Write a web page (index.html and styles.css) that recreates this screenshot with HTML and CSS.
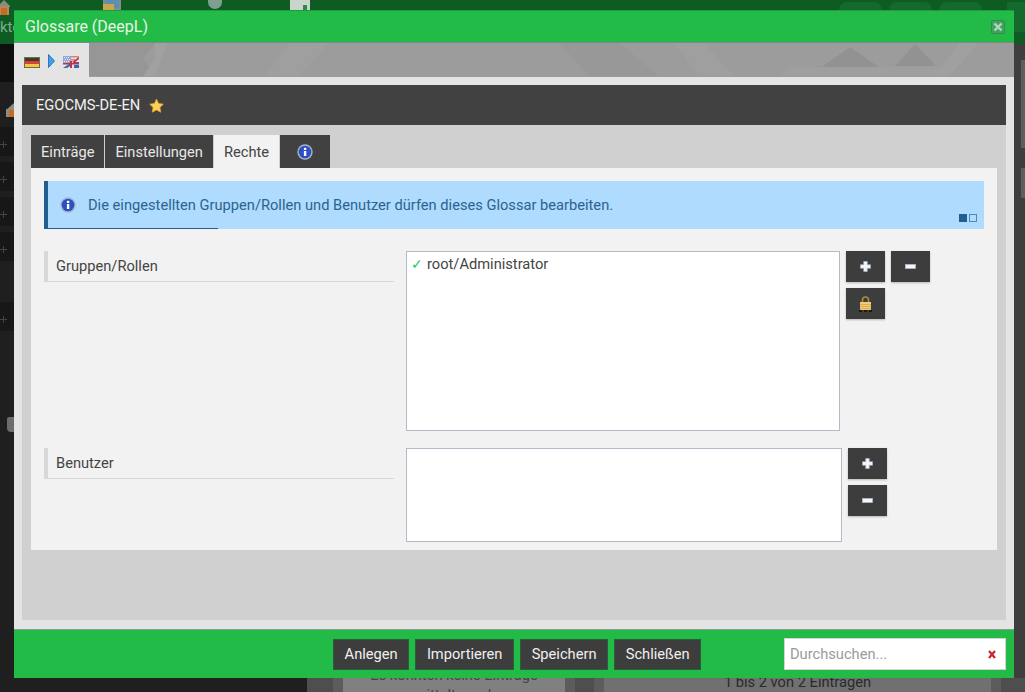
FILE: index.html
```html
<!DOCTYPE html>
<html lang="de">
<head>
    <meta charset="UTF-8">
    <title>Glossare (DeepL)</title>
    <link rel="stylesheet" href="styles.css">
</head>
<body>
    <div class="desktop">
        <div class="topbar">
            <div class="top-left">
                <svg class="top-home" width="10" height="15" viewBox="0 0 10 15">
                    <path d="M-3 7l7-7 7 7z" fill="#8a8a80"/>
                    <rect x="-1" y="6" width="10" height="9" fill="#b5895c"/>
                    <rect x="1" y="8" width="6" height="7" fill="#c66c22"/>
                </svg>
                <div class="top-label">kto</div>
            </div>
            <div class="top-icons">
                <svg width="18" height="10" viewBox="0 0 18 10">
                    <rect width="18" height="10" fill="#7f8f8c"/>
                    <rect x="2" y="0" width="14" height="8" fill="#5f8fb0"/>
                    <rect x="0" y="4" width="11" height="6" fill="#c9a84c"/>
                </svg>
                <span class="top-round"></span>
                <svg width="20" height="10" viewBox="0 0 20 10">
                    <rect width="20" height="10" fill="#c9d4cc"/>
                    <rect x="13" y="5" width="4" height="5" fill="#2a8a40"/>
                </svg>
            </div>
            <div class="top-pills">
                <span></span><span></span><span></span>
            </div>
            <div class="top-end"></div>
        </div>
        <div class="desk-main">
            <div class="side">
                <div class="side-top"></div>
                <div class="side-home">
                    <svg width="8" height="14" viewBox="0 0 8 14">
                        <path d="M0 7l8-7v7z" fill="#8c8c86"/>
                        <rect y="6" width="8" height="8" fill="#8c8c86"/>
                        <rect x="3" y="7" width="5" height="7" fill="#c66c22"/>
                    </svg>
                </div>
                <div class="side-row"><svg width="7" height="7" viewBox="0 0 7 7"><use href="#thin-plus"/></svg></div>
                <div class="side-row"><svg width="7" height="7" viewBox="0 0 7 7"><use href="#thin-plus"/></svg></div>
                <div class="side-row"><svg width="7" height="7" viewBox="0 0 7 7"><use href="#thin-plus"/></svg></div>
                <div class="side-row"><svg width="7" height="7" viewBox="0 0 7 7"><use href="#thin-plus"/></svg></div>
                <div class="side-row empty"></div>
                <div class="side-row"><svg width="7" height="7" viewBox="0 0 7 7"><use href="#thin-plus"/></svg></div>
                <div class="side-cup"></div>
            </div>
            <div class="desk-right">
                <div class="scroll-part"></div>
                <div class="scroll-part second"></div>
            </div>
        </div>
        <div class="desk-bottom">
            <div class="desk-card small"><div class="card-inner">Es konnten keine Einträge<br>ermittelt werden</div></div>
            <div class="desk-card wide"><div class="card-inner">1 bis 2 von 2 Einträgen</div></div>
        </div>
    </div>

    <div class="dialog">
        <div class="titlebar">
            <span>Glossare (DeepL)</span>
            <button class="close-btn" type="button" aria-label="Schließen">
                <svg width="10" height="10" viewBox="0 0 10 10"><path d="M1.500 1.500l7 7M8.500 1.500l-7 7" stroke="#a9dcb7" stroke-width="2.400"/></svg>
            </button>
        </div>
        <div class="strip">
            <svg class="strip-art" width="925" height="33" viewBox="0 0 925 33">
                <path d="M0 0h66l-12 16 12 17H0z" fill="#969696"/>
                <path d="M66 0h12L66 33h-12l12-17z" fill="#a1a1a1"/>
                <path d="M200 0h40l-30 33h-34z" fill="#9f9f9f"/>
                <path d="M470 0h60l40 33H500z" fill="#989898"/>
                <path d="M585 0h30l30 33h-36z" fill="#9f9f9f"/>
                <path d="M700 24h160l-14 9H690z" fill="#9f9f9f"/>
                <path d="M761 4l29 20H733z" fill="#929292"/>
                <path d="M826 1l21 22h-41z" fill="#929292"/>
                <path d="M870 0h20l-30 33h-14z" fill="#a0a0a0"/>
            </svg>
            <div class="flag-tab">
                <svg width="16" height="11" viewBox="0 0 16 11">
                    <rect width="16" height="11" fill="#7a6a3c"/>
                    <rect x="1" y="1" width="14" height="3" fill="#3a3a3a"/>
                    <rect x="1" y="4" width="14" height="3" fill="#d8402f"/>
                    <rect x="1" y="7" width="14" height="3" fill="#f4c842"/>
                </svg>
                <svg class="arrow" width="7" height="14" viewBox="0 0 7 14"><path d="M0.500 0.500L6.500 7 0.500 13.500z" fill="#3f9fe8" stroke="#2a78c0"/></svg>
                <svg width="16" height="12" viewBox="0 0 16 12">
                    <rect width="16" height="12" fill="#e4e4ea"/>
                    <rect width="8" height="7" fill="#8fa8d8"/>
                    <path d="M1 1h1v1H1zM3 1h1v1H3zM5 1h1v1H5zM2 3h1v1H2zM4 3h1v1H4zM6 3h1v1H6zM1 5h1v1H1zM3 5h1v1H3zM5 5h1v1H5z" fill="#eef0f6"/>
                    <path d="M8 0h8v1.500H8zM8 3h4v1.500H8z" fill="#d88080"/>
                    <path d="M0 12l6-4h1v2l-3 2zM16 12h-5V9h5zM11 7V6h5v1z" fill="#3a68b0"/>
                    <path d="M7 5h2v7H7zM0 7h16v1.500H0z" fill="#c8303a"/>
                    <path d="M9 6l7-5v2l-5 4z" fill="#c8303a"/>
                </svg>
            </div>
        </div>
        <div class="dialog-body">
            <div class="glossary-head">
                <span>EGOCMS-DE-EN</span>
                <svg width="15" height="15" viewBox="0 0 16 15"><path d="M8 .8l2.200 4.600 5 .7-3.600 3.500.9 5L8 12.200 3.500 14.600l.9-5L.8 6.100l5-.7z" fill="#fcd25a" stroke="#eda52c" stroke-width=".9"/></svg>
            </div>
            <div class="panel">
                <div class="tabs">
                    <div class="tab">Einträge</div>
                    <div class="tab">Einstellungen</div>
                    <div class="tab active">Rechte</div>
                    <div class="tab info-tab">
                        <svg width="16" height="16" viewBox="0 0 16 16"><use href="#info"/></svg>
                    </div>
                </div>
                <div class="tab-content">
                    <div class="info-box">
                        <svg width="16" height="16" viewBox="0 0 16 16"><use href="#info"/></svg>
                        <span>Die eingestellten Gruppen/Rollen und Benutzer dürfen dieses Glossar bearbeiten.</span>
                        <div class="pager"><i class="on"></i><i></i></div>
                        <div class="progress"></div>
                    </div>

                    <div class="field first">
                        <div class="field-label">Gruppen/Rollen</div>
                        <div class="list-box">
                            <div class="list-item"><span class="check">✓</span>root/Administrator</div>
                        </div>
                        <div class="tool-btns">
                            <button class="tool-btn" type="button"><svg width="11" height="11" viewBox="0 0 11 11"><use href="#plus"/></svg></button>
                            <button class="tool-btn" type="button"><svg width="11" height="11" viewBox="0 0 11 11"><use href="#minus"/></svg></button>
                            <button class="tool-btn" type="button">
                                <svg width="13" height="16" viewBox="0 0 13 16">
                                    <path d="M3.500 7V4a3 3 0 0 1 6 0v3" fill="none" stroke="#b08a3a" stroke-width="1.600"/>
                                    <rect x="1" y="6" width="11" height="8" fill="#f0ca78"/>
                                    <path d="M1 8.500h11M1 10.500h11M1 12.500h11" stroke="#dcb050"/>
                                    <path d="M0 15h3M5 15h3M10 15h3" stroke="#120c04" stroke-width="1.600"/>
                                </svg>
                            </button>
                        </div>
                    </div>

                    <div class="field second">
                        <div class="field-label">Benutzer</div>
                        <div class="list-box"></div>
                        <div class="tool-btns stacked">
                            <button class="tool-btn" type="button"><svg width="11" height="11" viewBox="0 0 11 11"><use href="#plus"/></svg></button>
                            <button class="tool-btn" type="button"><svg width="11" height="11" viewBox="0 0 11 11"><use href="#minus"/></svg></button>
                        </div>
                    </div>
                </div>
            </div>
        </div>
        <div class="footer">
            <div class="footer-btns">
                <button type="button">Anlegen</button>
                <button type="button">Importieren</button>
                <button type="button">Speichern</button>
                <button type="button">Schließen</button>
            </div>
            <div class="search">
                <span>Durchsuchen...</span>
                <svg width="8" height="9" viewBox="0 0 8 9"><path d="M1 1l6 7M7 1L1 8" stroke="#c8242c" stroke-width="2.200"/></svg>
            </div>
        </div>
    </div>

    <svg class="defs" width="0" height="0">
        <defs>
            <g id="info">
                <circle cx="8" cy="8" r="7.700" fill="#a8b4cc"/>
                <circle cx="8" cy="8" r="6.300" fill="#2d4fc0"/>
                <rect x="6.900" y="7" width="2.400" height="5" fill="#fff"/>
                <rect x="6.900" y="3.800" width="2.400" height="2.200" fill="#fff"/>
            </g>
            <path id="plus" d="M3.700 .5h3.600v3.200h3.200v3.600H7.300v3.200H3.700V7.300H.5V3.700h3.200z" fill="#f2f5fa" stroke="#aeb8c8" stroke-width=".6"/>
            <rect id="minus" x=".5" y="3.500" width="10" height="4" fill="#f2f5fa" stroke="#aeb8c8" stroke-width=".8"/>
            <path id="thin-plus" d="M0 3.500h7M3.500 0v7" stroke="#444" stroke-width="1"/>
        </defs>
    </svg>
</body>
</html>
```

FILE: styles.css
```css
* {
    margin: 0;
    padding: 0;
    box-sizing: border-box;
}

body {
    width: 1025px;
    height: 692px;
    overflow: hidden;
    position: relative;
    background: #1f1f1f;
    font-family: 'Roboto', sans-serif;
    font-size: 14.67px;
    color: #444;
}

button {
    font-family: inherit;
    border: none;
}

svg {
    display: block;
    flex-shrink: 0;
}

/* page behind the dialog */
.desktop {
    height: 692px;
    display: flex;
    flex-direction: column;
}

.topbar {
    height: 44px;
    background: #0e5c24;
    display: flex;
    align-items: flex-start;
}

.top-left {
    width: 14px;
    overflow: hidden;
}

.top-label {
    margin-top: 3px;
    color: #7fae8c;
    font-size: 15px;
    line-height: 18px;
}

.top-icons {
    width: 296px;
    margin-left: 89px;
    display: flex;
    align-items: flex-start;
}

.top-round {
    display: block;
    width: 14px;
    height: 9px;
    margin: 0 68px 0 87px;
    background: #7f9f90;
    border-radius: 0 0 7px 7px;
}

.top-pills {
    display: flex;
    gap: 7px;
    padding-top: 2px;
    margin-left: 441px;
}

.top-pills span {
    width: 43px;
    height: 9px;
    border-radius: 8px 8px 0 0;
    background: #146a2c;
}

.top-end {
    width: 18px;
    height: 30px;
    margin: 2px 0 0 25px;
    background: #146a2c;
}

.desk-main {
    flex: 1;
    display: flex;
    justify-content: space-between;
}

.side {
    width: 14px;
}

.side-top {
    height: 38px;
    background: #0f0f0f;
}

.side-home {
    height: 45px;
    padding: 21px 0 0 6px;
}

.side-row {
    height: 35px;
    padding-top: 14px;
    background: #171717;
    border-bottom: 6px solid #1f1f1f;
}

.side-row.empty {
    background: none;
}

.side-cup {
    width: 7px;
    height: 15px;
    margin: 80px 0 0 7px;
    background: #6c6c6c;
    border-radius: 2px 0 0 4px;
}

.desk-right {
    width: 11px;
    padding: 16px 0 0 7px;
    background: #3e3e3e;
}

.scroll-part {
    height: 88px;
    background: #5e5e5e;
}

.scroll-part.second {
    height: 30px;
    margin-top: 20px;
}

.desk-bottom {
    height: 14px;
    background: #4e4e4e;
    display: flex;
    margin-left: 307px;
    padding-left: 26px;
    gap: 19px;
    color: #2a2a2a;
    line-height: 20px;
    text-align: center;
}

.desk-card {
    height: 27px;
    margin-top: -13px;
    border: solid #5c5c5c;
    border-width: 0 10px;
    overflow: hidden;
}

.desk-card.small {
    width: 242px;
}

.desk-card.wide {
    width: 407px;
}

.card-inner {
    height: 100%;
    background: #707070;
}

.small .card-inner {
    background: #808080;
    color: #444;
}

.wide .card-inner {
    padding-top: 7px;
}

/* dialog */
.dialog {
    position: absolute;
    left: 14px;
    top: 10px;
    width: 1000px;
    height: 668px;
    display: flex;
    flex-direction: column;
}

.titlebar {
    height: 33px;
    flex-shrink: 0;
    background: #22bb47;
    border-top: 1px solid #1c9c3c;
    border-bottom: 1px solid #7d8a80;
    display: flex;
    align-items: center;
    justify-content: space-between;
    padding: 0 9px 0 11px;
    color: #e8f4e4;
    font-size: 16px;
}

.close-btn {
    width: 14px;
    height: 14px;
    background: #45a160;
    border: 1px solid #35894e;
    border-radius: 2px;
    display: flex;
    align-items: center;
    justify-content: center;
}

.strip {
    height: 34px;
    flex-shrink: 0;
    position: relative;
    background: #9c9c9c;
}

.strip-art {
    position: absolute;
    left: 75px;
    top: 0;
}

.flag-tab {
    position: relative;
    width: 75px;
    height: 34px;
    background: #e4e4e4;
    display: flex;
    align-items: center;
    gap: 8px;
    padding-left: 10px;
    padding-top: 4px;
}

.flag-tab .arrow {
    margin-top: -2px;
}

.dialog-body {
    flex: 1;
    min-height: 0;
    background: #e4e4e4;
    padding: 8px 8px 9px;
    display: flex;
    flex-direction: column;
}

.glossary-head {
    height: 40px;
    flex-shrink: 0;
    background: #414141;
    color: #f2f2f2;
    display: flex;
    align-items: center;
    gap: 9px;
    padding-left: 14px;
}

.panel {
    flex: 1;
    background: #d0d0d0;
    padding: 10px 9px 0;
}

.tabs {
    display: flex;
    gap: 1px;
    height: 33px;
}

.tab {
    padding: 0 10px;
    background: #414141;
    color: #e8e8e8;
    display: flex;
    align-items: center;
}

.tab.active {
    background: #f2f2f2;
    color: #444;
}

.tab.info-tab {
    width: 50px;
    padding: 0;
    justify-content: center;
}

.tab-content {
    height: 382px;
    background: #f2f2f2;
    padding: 13px 13px 0;
}

.info-box {
    height: 48px;
    position: relative;
    background: #afdbfe;
    border-left: 4px solid #215d8e;
    color: #2b6390;
    display: flex;
    align-items: center;
    gap: 12px;
    padding-left: 12px;
    padding-bottom: 1px;
}

.progress {
    position: absolute;
    left: 0;
    bottom: 0;
    width: 170px;
    height: 1px;
    background: #215d8e;
}

.pager {
    position: absolute;
    right: 7px;
    bottom: 7px;
    display: flex;
    gap: 2px;
}

.pager i {
    display: block;
    width: 8px;
    height: 8px;
    border: 1px solid #4d87bd;
}

.pager i.on {
    background: #215d8e;
    border-color: #215d8e;
}

.field {
    display: flex;
    align-items: flex-start;
}

.field.first {
    margin-top: 22px;
    height: 180px;
}

.field.second {
    margin-top: 17px;
    height: 94px;
}

.field-label {
    width: 350px;
    height: 31px;
    flex-shrink: 0;
    border-left: 4px solid #d8d8d8;
    border-bottom: 1px solid #d8d8d8;
    padding-left: 8px;
    line-height: 30px;
    color: #444;
}

.list-box {
    width: 434px;
    height: 100%;
    margin-left: 12px;
    background: #fff;
    border: 1px solid #b4b9c8;
    padding: 3px 4px;
}

.second .list-box {
    width: 436px;
}

.list-item {
    line-height: 19px;
    color: #444;
}

.check {
    color: #22c55e;
    margin-right: 4px;
    font-size: 14px;
}

.tool-btns {
    width: 84px;
    margin-left: 6px;
    display: flex;
    flex-wrap: wrap;
    gap: 6px;
}

.tool-btns.stacked {
    width: 39px;
}

.tool-btn {
    width: 39px;
    height: 31px;
    background: #3d3d3d;
    box-shadow: 0 1px 2px rgba(0, 0, 0, 0.25);
    display: flex;
    align-items: center;
    justify-content: center;
}

.footer {
    height: 49px;
    flex-shrink: 0;
    background: #22bb47;
    border-top: 1px solid #88a08e;
    display: flex;
    align-items: center;
    padding-left: 319px;
}

.footer-btns {
    display: flex;
    gap: 6px;
}

.footer-btns button {
    height: 31px;
    padding: 0 10.600px;
    background: #3d3d3d;
    border: 1px solid #2a5e3a;
    color: #f0f0f0;
    font-size: 14.67px;
}

.search {
    width: 222px;
    height: 32px;
    margin-left: auto;
    margin-right: 8px;
    background: #fff;
    border: 1px solid #d4d4d4;
    display: flex;
    align-items: center;
    justify-content: space-between;
    padding: 0 9px 0 5px;
    color: #9a9a9a;
}
```
